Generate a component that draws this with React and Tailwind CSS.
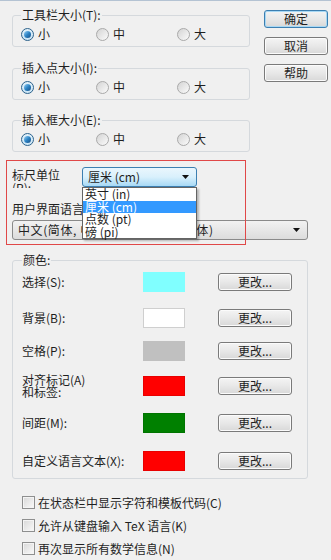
import React from 'react';

const FONT = "font-['Noto_Sans_CJK_SC','Liberation_Sans',sans-serif]";

function Radio({ checked, label, width }) {
  return (
    <div className={`flex items-center h-[14px] gap-[4px] ${width}`}>
      {checked ? (
        <span className="w-[13px] h-[13px] rounded-full border border-[#2c628b] bg-linear-to-b from-[#e2f1fa] to-[#c9e4f5] flex items-center justify-center">
          <span className="w-[7px] h-[7px] rounded-full bg-linear-to-br from-[#8fd0f5] via-[#2b83c4] to-[#1b4f85]" />
        </span>
      ) : (
        <span className="w-[13px] h-[13px] rounded-full border border-[#a9a9a9] bg-linear-to-br from-[#d4d4d4] to-[#fbfbfb]" />
      )}
      <span>{label}</span>
    </div>
  );
}

function SizeGroup({ title, className }) {
  return (
    <fieldset className={`border border-[#d5d9dd] rounded-[3px] pl-[8px] pt-[5px] pb-[5px] ${className}`}>
      <legend className="px-[1px] leading-[14px]">{title}</legend>
      <div className="flex">
        <Radio checked label="小" width="w-[75px]" />
        <Radio label="中" width="w-[81px]" />
        <Radio label="大" width="w-[60px]" />
      </div>
    </fieldset>
  );
}

function Button({ children, primary, className = '' }) {
  return (
    <div
      className={`h-[18px] rounded-[3px] border flex items-center justify-center leading-[14px] bg-linear-to-b from-[#f4f4f4] via-[#e8e8e8] to-[#d8d8d8] ${
        primary
          ? 'border-[#3c7fb1] shadow-[inset_0_0_0_1px_#a8d8f4]'
          : 'border-[#7a7a7a] shadow-[inset_0_0_0_1px_#fbfbfb]'
      } ${className}`}
    >
      {children}
    </div>
  );
}

function Arrow() {
  return (
    <svg width="7" height="4" viewBox="0 0 7 4">
      <path d="M0 0 H7 L3.5 4 Z" fill="#111" />
    </svg>
  );
}

function ColorRow({ label, color, border, className = '' }) {
  return (
    <div className={`flex items-center h-[20px] ${className}`}>
      <div className="w-[121px] leading-[12px]">{label}</div>
      <div className={`w-[42px] h-[20px] border ${border}`} style={{ backgroundColor: color }} />
      <Button className="w-[74px] ml-[33px]">更改...</Button>
    </div>
  );
}

function Check({ label, className = '' }) {
  return (
    <div className={`flex items-center h-[13px] gap-[3px] ${className}`}>
      <span className="w-[13px] h-[13px] border border-[#8e8f8f] bg-linear-to-br from-[#d8d8d8] to-[#fafafa] shadow-[inset_0_0_0_1px_#f4f4f4]" />
      <span className="leading-[14px]">{label}</span>
    </div>
  );
}

export default function App() {
  return (
    <div className={`w-[331px] h-[560px] bg-[#f0f0f0] border-t border-[#b4c3d3] overflow-hidden relative text-[12px] text-[#1f1f1f] ${FONT}`}>
      {/* top: size groups + dialog buttons */}
      <div className="flex pl-[12px]">
        <div className="w-[238px] pt-[7px]">
          <SizeGroup title="工具栏大小(T):" />
          <SizeGroup title="插入点大小(I):" className="mt-[14px]" />
          <SizeGroup title="插入框大小(E):" className="mt-[13px]" />
        </div>
        <div className="ml-[14px] pt-[9px] flex flex-col gap-[9px]">
          <Button primary className="w-[64px]">确定</Button>
          <Button className="w-[64px]">取消</Button>
          <Button className="w-[64px]">帮助</Button>
        </div>
      </div>

      {/* ruler units + UI language */}
      <div className="pl-[12px] mt-[15px]">
        <div className="flex items-start">
          <div className="w-[70px] h-[21px] overflow-hidden leading-[13px] pt-[1px]">
            标尺单位<br />(R):
          </div>
          <div className="relative w-[115px]">
            <div className="h-[20px] rounded-[3px] border border-[#3c7fb1] bg-linear-to-b from-[#eaf6fd] via-[#d9f0fc] to-[#a7d9f5] flex items-center justify-between pl-[5px] pr-[7px]">
              <span className="leading-[14px]">厘米 (cm)</span>
              <Arrow />
            </div>
            <div className="absolute left-0 top-[20px] w-[115px] z-20 bg-white border border-[#646464] shadow-[2px_2px_2px_rgba(0,0,0,0.25)] leading-[12.5px]">
              <div className="pl-[2px] h-[12.5px]">英寸 (in)</div>
              <div className="pl-[2px] h-[12.5px] bg-[#3399ff] text-white">厘米 (cm)</div>
              <div className="pl-[2px] h-[12.5px]">点数 (pt)</div>
              <div className="pl-[2px] h-[12.5px]">磅 (pi)</div>
            </div>
          </div>
        </div>
        <div className="mt-[15px] leading-[12px] h-[12px]">用户界面语言(L):</div>
        <div className="mt-[5px] w-[296px] h-[20px] rounded-[3px] border border-[#8a8a8a] bg-linear-to-b from-[#f2f2f2] to-[#dcdcdc] flex items-center justify-between pl-[5px] pr-[7px]">
          <span className="leading-[14px] whitespace-nowrap tracking-[0.6px]">中文(简体, 中国) - 中文(中国, 简体)</span>
          <Arrow />
        </div>
      </div>

      {/* colours */}
      <fieldset className="ml-[12px] mt-[13px] w-[296px] border border-[#d5d9dd] rounded-[3px] pl-[9px] pt-[5px] pb-[7px]">
        <legend className="px-[1px] leading-[14px]">颜色:</legend>
        <ColorRow label="选择(S):" color="#80ffff" border="border-[#80ffff]" />
        <ColorRow label="背景(B):" color="#ffffff" border="border-[#cfcfcf]" className="mt-[16px]" />
        <ColorRow label="空格(P):" color="#c0c0c0" border="border-[#c0c0c0]" className="mt-[13px]" />
        <ColorRow label={<>对齐标记(A)<br />和标签:</>} color="#ff0000" border="border-[#e80000]" className="mt-[15px]" />
        <ColorRow label="间距(M):" color="#008000" border="border-[#007400]" className="mt-[17px]" />
        <ColorRow label="自定义语言文本(X):" color="#ff0000" border="border-[#e80000]" className="mt-[18px]" />
      </fieldset>

      {/* options */}
      <div className="pl-[22px] mt-[17px] flex flex-col gap-[10px]">
        <Check label="在状态栏中显示字符和模板代码(C)" />
        <Check label="允许从键盘输入 TeX 语言(K)" />
        <Check label="再次显示所有数学信息(N)" />
      </div>

      {/* highlight annotation */}
      <div className="absolute left-[6px] top-[159px] w-[240px] h-[85px] border border-[#e04848] pointer-events-none z-30" />
    </div>
  );
}
